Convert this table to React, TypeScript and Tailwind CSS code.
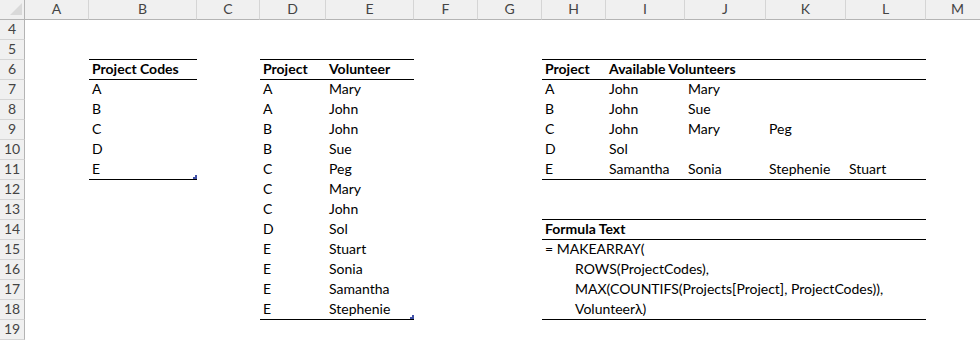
import React from "react";

type Cell = { text?: string; bold?: boolean; indent?: boolean };

const COLS = ["A", "B", "C", "D", "E", "F", "G", "H", "I", "J", "K", "L", "M"];
const ROWS = Array.from({ length: 16 }, (_, i) => i + 4);

// cell contents keyed by "B6" style addresses
const cells: Record<string, Cell> = {};
const put = (addr: string, text: string, bold = false, indent = false) => {
  cells[addr] = { text, bold, indent };
};

// Project codes table
put("B6", "Project Codes", true);
["A", "B", "C", "D", "E"].forEach((c, i) => put(`B${7 + i}`, c));

// Projects table
put("D6", "Project", true);
put("E6", "Volunteer", true);
const projects: [string, string][] = [
  ["A", "Mary"],
  ["A", "John"],
  ["B", "John"],
  ["B", "Sue"],
  ["C", "Peg"],
  ["C", "Mary"],
  ["C", "John"],
  ["D", "Sol"],
  ["E", "Stuart"],
  ["E", "Sonia"],
  ["E", "Samantha"],
  ["E", "Stephenie"],
];
projects.forEach(([p, v], i) => {
  put(`D${7 + i}`, p);
  put(`E${7 + i}`, v);
});

// Spilled result
put("H6", "Project", true);
put("I6", "Available Volunteers", true);
const avail: string[][] = [
  ["A", "John", "Mary"],
  ["B", "John", "Sue"],
  ["C", "John", "Mary", "Peg"],
  ["D", "Sol"],
  ["E", "Samantha", "Sonia", "Stephenie", "Stuart"],
];
avail.forEach((row, i) => {
  row.forEach((v, j) => put(`${COLS[7 + j]}${7 + i}`, v));
});

// Formula listing
put("H14", "Formula Text", true);
put("H15", "= MAKEARRAY(");
put("H16", "ROWS(ProjectCodes),", false, true);
put("H17", "MAX(COUNTIFS(Projects[Project], ProjectCodes)),", false, true);
put("H18", "Volunteerλ)", false, true);

// ruled blocks: top rule above header, rule below header, rule below last row
const blocks = [
  { from: 1, to: 1, header: 6, last: 11, handle: true },
  { from: 3, to: 4, header: 6, last: 18, handle: true },
  { from: 7, to: 11, header: 6, last: 11, handle: false },
  { from: 7, to: 11, header: 14, last: 18, handle: false },
];

function ruleBelow(col: number, row: number) {
  return blocks.some(
    (b) =>
      col >= b.from &&
      col <= b.to &&
      (row === b.header - 1 || row === b.header || row === b.last)
  );
}

function hasHandle(col: number, row: number) {
  return blocks.some((b) => b.handle && col === b.to && row === b.last);
}

const font = { fontFamily: "Lato, 'Noto Sans', 'DejaVu Sans', sans-serif" };

function Corner() {
  return (
    <div className="relative h-5 border-r border-b border-r-[#b4b4b4] border-b-[#b4b4b4] bg-[#f0f0f0]">
      <svg className="absolute left-[10px] top-[3px]" width="12" height="12" viewBox="0 0 12 12">
        <polygon points="12,0 12,12 0,12" fill="#d9d9d9" />
      </svg>
    </div>
  );
}

export default function App() {
  return (
    <div className="h-[340px] w-[980px] overflow-hidden bg-white text-black" style={font}>
      <div className="grid grid-cols-[25px_64px_108px_63px_66px_88px_64px_64px_64px_79px_81px_80px_80px_64px] grid-rows-[repeat(17,20px)]">
        <Corner />
        {COLS.map((c) => (
          <div
            key={c}
            className="h-5 border-r border-b border-r-[#d5d5d5] border-b-[#b4b4b4] bg-[#f0f0f0] text-center text-[14px] leading-[17px] text-[#444]"
          >
            {c}
          </div>
        ))}
        {ROWS.map((r) => (
          <React.Fragment key={r}>
            <div className="h-5 border-r border-b border-r-[#b4b4b4] border-b-[#d5d5d5] bg-[#f0f0f0] text-center text-[14px] leading-[17px] text-[#444]">
              {r}
            </div>
            {COLS.map((c, ci) => {
              const cell = cells[`${c}${r}`];
              const rule = ruleBelow(ci, r);
              return (
                <div
                  key={c}
                  className={
                    rule
                      ? "relative h-5 whitespace-nowrap border-b border-black pl-[3px] text-[14px] leading-[17px]"
                      : "relative h-5 whitespace-nowrap pl-[3px] text-[14px] leading-[17px]"
                  }
                >
                  {cell && (
                    <span className={(cell.bold ? "font-bold " : "") + (cell.indent ? "pl-[30px]" : "")}>
                      {cell.text}
                    </span>
                  )}
                  {hasHandle(ci, r) && (
                    <svg className="absolute bottom-0 right-0" width="4" height="4" viewBox="0 0 4 4">
                      <path d="M2 0H4V4H0V2H2Z" fill="#3f4fa6" />
                    </svg>
                  )}
                </div>
              );
            })}
          </React.Fragment>
        ))}
      </div>
    </div>
  );
}
